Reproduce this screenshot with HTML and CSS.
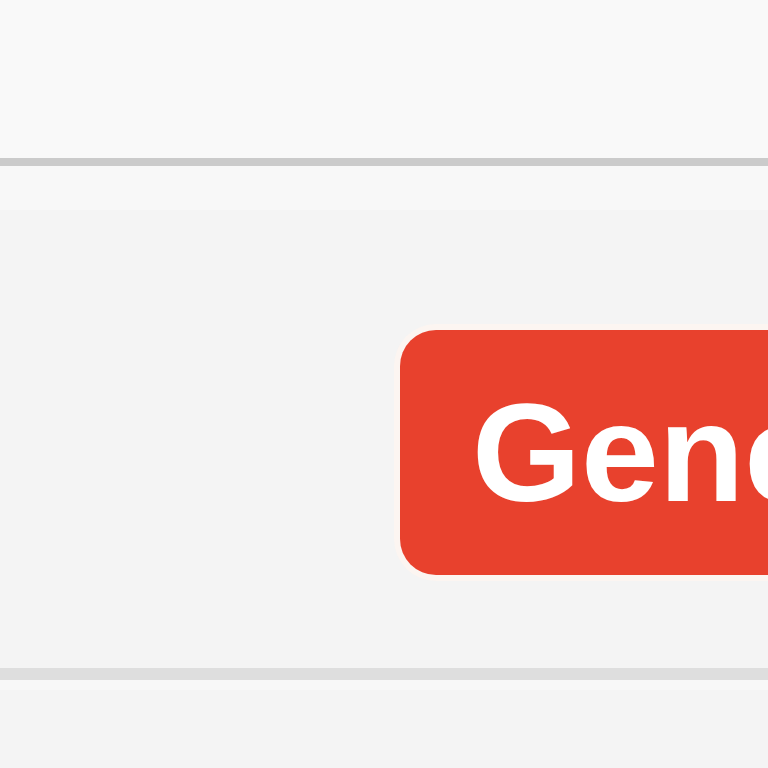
FILE: index.html
```html
<!DOCTYPE html>
<html>
<head>
<meta charset="utf-8">
<link rel="stylesheet" href="styles.css">
</head>
<body>
<div class="page">
  <header class="header"></header>
  <div class="band"></div>
  <main class="main">
    <button class="btn">Generate</button>
  </main>
  <div class="divider"></div>
  <div class="band-low"></div>
</div>
</body>
</html>
```
FILE: styles.css
```css
html, body {
  margin: 0;
  padding: 0;
  overflow: hidden;
  background: #f4f4f4;
}
.page {
  width: 768px;
  height: 768px;
  display: flex;
  flex-direction: column;
  overflow: hidden;
}
.header {
  height: 158px;
  flex: none;
  background: #f9f9f9;
  border-bottom: 8px solid #cbcbcb;
}
.band {
  height: 44px;
  flex: none;
  background: #f8f8f8;
}
.main {
  height: 458px;
  flex: none;
  box-sizing: border-box;
  padding: 120px 0 0 400px;
  background: #f4f4f4;
  display: flex;
  align-items: flex-start;
}
.btn {
  flex: none;
  height: 245px;
  margin: 0;
  border: none;
  border-radius: 36px;
  background: #e8412d;
  color: #fff;
  font-family: "Liberation Sans", Arial, sans-serif;
  font-weight: bold;
  font-size: 140px;
  line-height: 1;
  padding: 0 60px 0 72px;
  white-space: nowrap;
  display: flex;
  align-items: center;
  box-shadow: 0 0 0 6px rgba(255, 245, 240, 0.7);
}
.divider {
  height: 12px;
  flex: none;
  background: #dedede;
}
.band-low {
  height: 10px;
  flex: none;
  background: #f8f8f8;
}
```
